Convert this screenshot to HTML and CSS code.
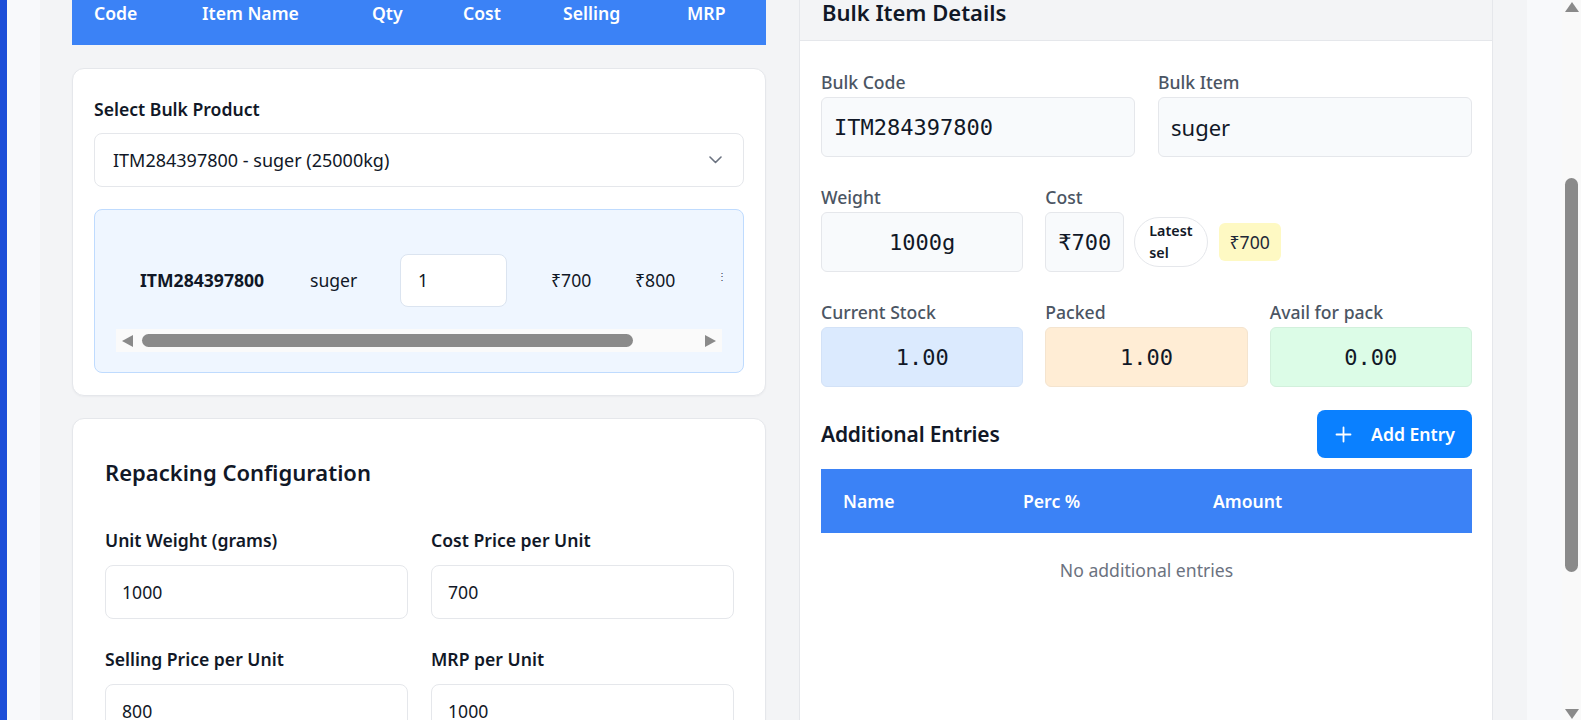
FILE: index.html
```html
<!DOCTYPE html>
<html lang="en">
<head>
<meta charset="utf-8">
<title>Repack Bulk Item</title>
<link rel="stylesheet" href="styles.css">
</head>
<body>
<div class="app">
  <div class="rail"></div>
  <div class="gutter"></div>
  <main class="main">
    <section class="col">
      <div class="list-head">
        <span class="lh-code">Code</span>
        <span class="lh-name">Item Name</span>
        <span class="lh-qty">Qty</span>
        <span class="lh-cost">Cost</span>
        <span class="lh-sell">Selling</span>
        <span class="lh-mrp">MRP</span>
      </div>

      <div class="card card-select">
        <div class="field-label">Select Bulk Product</div>
        <div class="select">
          <span>ITM284397800 - suger (25000kg)</span>
          <svg class="chev" width="13" height="8" viewBox="0 0 13 8"><path d="M1 1l5.5 5.5L12 1" fill="none" stroke="#6b7280" stroke-width="1.6" stroke-linecap="round" stroke-linejoin="round"/></svg>
        </div>
        <div class="picked">
          <div class="picked-row">
            <div class="pc pc-code">ITM284397800</div>
            <div class="pc pc-name">suger</div>
            <div class="pc pc-qty"><div class="qty-input">1</div></div>
            <div class="pc pc-cost">₹700</div>
            <div class="pc pc-sell">₹800</div>
            <div class="pc-more">⋮</div>
          </div>
          <div class="hscroll">
            <span class="arr arr-left"></span>
            <span class="hthumb"></span>
            <span class="arr arr-right"></span>
          </div>
        </div>
      </div>

      <div class="card card-config">
        <h2 class="config-title">Repacking Configuration</h2>
        <div class="form-grid">
          <div class="fg">
            <div class="fg-label">Unit Weight (grams)</div>
            <div class="fg-input">1000</div>
          </div>
          <div class="fg">
            <div class="fg-label">Cost Price per Unit</div>
            <div class="fg-input">700</div>
          </div>
          <div class="fg">
            <div class="fg-label">Selling Price per Unit</div>
            <div class="fg-input">800</div>
          </div>
          <div class="fg">
            <div class="fg-label">MRP per Unit</div>
            <div class="fg-input">1000</div>
          </div>
        </div>
      </div>
    </section>

    <section class="col panel">
      <div class="panel-head">Bulk Item Details</div>
      <div class="panel-body">
        <div class="grid2">
          <div>
            <div class="d-label">Bulk Code</div>
            <div class="d-box mono">ITM284397800</div>
          </div>
          <div>
            <div class="d-label">Bulk Item</div>
            <div class="d-box">suger</div>
          </div>
        </div>

        <div class="grid3 row-gap">
          <div>
            <div class="d-label">Weight</div>
            <div class="d-box mono center">1000g</div>
          </div>
          <div>
            <div class="d-label">Cost</div>
            <div class="cost-line">
              <div class="d-box mono cost-box">₹700</div>
              <span class="latest">Latest sel</span>
              <span class="price-tag">₹700</span>
            </div>
          </div>
          <div></div>
        </div>

        <div class="grid3 row-gap">
          <div>
            <div class="d-label">Current Stock</div>
            <div class="d-box mono center stat-blue">1.00</div>
          </div>
          <div>
            <div class="d-label">Packed</div>
            <div class="d-box mono center stat-orange">1.00</div>
          </div>
          <div>
            <div class="d-label">Avail for pack</div>
            <div class="d-box mono center stat-green">0.00</div>
          </div>
        </div>

        <div class="entries-bar">
          <h3 class="entries-title">Additional Entries</h3>
          <button class="add-btn" type="button">
            <svg width="17" height="17" viewBox="0 0 17 17"><path d="M8.5 1.5v14M1.5 8.5h14" stroke="#fff" stroke-width="1.8" stroke-linecap="round"/></svg>
            <span>Add Entry</span>
          </button>
        </div>
        <div class="entries-head">
          <span>Name</span>
          <span>Perc %</span>
          <span>Amount</span>
        </div>
        <div class="entries-empty">No additional entries</div>
      </div>
    </section>
  </main>
  <div class="gutter-r"></div>
</div>

<div class="vscroll">
  <span class="v-up"></span>
  <span class="v-thumb"></span>
  <span class="v-down"></span>
</div>
</body>
</html>
```

FILE: styles.css
```css
* { box-sizing: border-box; }

html, body {
  margin: 0;
  height: 100%;
  overflow: hidden;
}

body {
  font-family: "Noto Sans", "Open Sans", sans-serif;
  font-size: 17.6px;
  color: #111827;
  background: #f3f4f6;
}

.app {
  display: flex;
  min-height: 720px;
}

.rail {
  flex: none;
  width: 7px;
  background: #1d4ed8;
}

.gutter {
  flex: none;
  width: 33px;
  background: #f8f9fb;
}

.gutter-r {
  flex: 1;
  background: #f8f9fb;
}

.main {
  flex: none;
  width: 1487px;
  display: flex;
  align-items: flex-start;
  gap: 33px;
  padding: 0 34px 0 32px;
  background: #f3f4f6;
}

.col {
  flex: none;
  width: 694px;
}

/* top list header */
.list-head {
  display: flex;
  height: 45px;
  background: #3b82f6;
  color: #fff;
  font-weight: 600;
  line-height: 26px;
  white-space: nowrap;
}
.list-head span { padding-left: 22px; flex: none; }
.lh-code { width: 108px; }
.lh-name { width: 170px; }
.lh-qty { width: 91px; }
.lh-cost { width: 100px; }
.lh-sell { width: 124px; }

/* cards */
.card {
  background: #fff;
  border: 1px solid #e5e7eb;
  border-radius: 12px;
  box-shadow: 0 1px 2px rgba(16, 24, 40, 0.04);
}

.card-select {
  margin-top: 23px;
  padding: 28px 21px 22px;
}

.field-label {
  font-weight: 600;
  line-height: 24px;
  margin-bottom: 12px;
}

.select {
  display: flex;
  align-items: center;
  justify-content: space-between;
  height: 54px;
  padding: 0 21px 0 18px;
  border: 1px solid #e5e7eb;
  border-radius: 8px;
  background: #fff;
  font-size: 18px;
}

.picked {
  margin-top: 22px;
  padding: 21px 21px 20px;
  background: #eff6ff;
  border: 1px solid #bfdbfe;
  border-radius: 8px;
}

.picked-row {
  display: flex;
  align-items: center;
  height: 98px;
  padding-left: 1px;
  white-space: nowrap;
}

.pc {
  flex: none;
  padding-left: 21px;
}
.pc-code { width: 172px; padding-left: 23px; font-weight: 700; }
.pc-name { width: 90px; }
.pc-qty { width: 151px; }
.pc-cost { width: 84px; }
.pc-sell { width: 84px; }
.pc-more {
  flex: none;
  width: 8px;
  margin-left: 19px;
  margin-top: -8px;
  font-size: 10px;
  line-height: 10px;
  text-align: center;
  color: #374151;
}

.qty-input {
  display: flex;
  align-items: center;
  width: 107px;
  height: 53px;
  padding-left: 17px;
  background: #fff;
  border: 1px solid #dbe4f0;
  border-radius: 8px;
}

.hscroll {
  display: flex;
  align-items: center;
  height: 23px;
  background: #fafafa;
}

.arr {
  width: 0;
  height: 0;
  border-top: 6px solid transparent;
  border-bottom: 6px solid transparent;
}
.arr-left {
  margin-left: 6px;
  border-right: 11px solid #8a8a8a;
}
.arr-right {
  margin-left: auto;
  margin-right: 6px;
  border-left: 11px solid #8a8a8a;
}

.hthumb {
  margin-left: 9px;
  width: 491px;
  height: 13px;
  border-radius: 7px;
  background: #8a8a8a;
}

/* repacking config */
.card-config {
  margin-top: 22px;
  padding: 38px 31px 40px 32px;
}

.config-title {
  margin: 0 0 41px;
  font-size: 22px;
  font-weight: 600;
  line-height: 30px;
}

.form-grid {
  display: grid;
  grid-template-columns: 1fr 1fr;
  column-gap: 23px;
  row-gap: 28px;
}

.fg-label {
  font-weight: 600;
  line-height: 24px;
  margin-bottom: 13px;
}

.fg-input {
  display: flex;
  align-items: center;
  height: 54px;
  padding-left: 16px;
  border: 1px solid #e5e7eb;
  border-radius: 8px;
  background: #fff;
}

/* right panel */
.panel {
  min-height: 760px;
  background: #fff;
  border: 1px solid #e5e7eb;
  border-top: none;
}

.panel-head {
  height: 41px;
  padding: 0 22px;
  background: #f3f4f6;
  border-bottom: 1px solid #e5e7eb;
  font-size: 22px;
  font-weight: 600;
  line-height: 24px;
}

.panel-body {
  padding: 29px 20px 0 21px;
}

.grid2 {
  display: grid;
  grid-template-columns: minmax(0, 1fr) minmax(0, 1fr);
  column-gap: 23px;
}

.grid3 {
  display: grid;
  grid-template-columns: minmax(0, 1fr) minmax(0, 1fr) minmax(0, 1fr);
  column-gap: 22px;
}

.row-gap { margin-top: 28px; }

.d-label {
  font-weight: 500;
  color: #4b5563;
  line-height: 24px;
  margin-bottom: 3px;
}

.d-box {
  display: flex;
  align-items: center;
  height: 60px;
  padding: 0 12px;
  font-size: 22px;
  background: #f8fafc;
  border: 1px solid #e5e7eb;
  border-radius: 6px;
  white-space: nowrap;
}

.mono {
  font-family: "DejaVu Sans Mono", "Liberation Mono", monospace;
}

.center { justify-content: center; }

.cost-line {
  display: flex;
  align-items: center;
  white-space: nowrap;
}

.cost-box { flex: none; }

.latest {
  flex: none;
  width: min-content;
  margin-left: 10px;
  padding: 2px 14px;
  font-size: 14.3px;
  font-weight: 600;
  line-height: 22px;
  white-space: normal;
  background: #fff;
  border: 1px solid #e5e7eb;
  border-radius: 9999px;
}

.price-tag {
  flex: none;
  margin-left: 11px;
  padding: 6px 11px;
  line-height: 26px;
  color: #1f2937;
  background: #fef9c3;
  border-radius: 6px;
}

.stat-blue { background: #dbeafe; border-color: #d3e2f7; }
.stat-orange { background: #ffedd5; border-color: #f4e4cf; }
.stat-green { background: #dcfce7; border-color: #d2f0dc; }

.entries-bar {
  display: flex;
  align-items: center;
  justify-content: space-between;
  margin-top: 23px;
}

.entries-title {
  margin: 0;
  font-size: 21px;
  font-weight: 600;
  letter-spacing: -0.2px;
  line-height: 30px;
}

.add-btn {
  display: flex;
  align-items: center;
  gap: 19px;
  height: 48px;
  padding: 0 17px 0 18px;
  font-family: inherit;
  font-size: 17.6px;
  font-weight: 600;
  color: #fff;
  background: #0a80ff;
  border: none;
  border-radius: 8px;
}

.entries-head {
  display: grid;
  grid-template-columns: 180px 190px 1fr;
  align-items: center;
  height: 64px;
  margin-top: 11px;
  background: #3b82f6;
  color: #fff;
  font-weight: 600;
}
.entries-head span { padding-left: 22px; }

.entries-empty {
  padding: 25px 0;
  text-align: center;
  line-height: 24px;
  color: #6b7280;
}

/* page scrollbar overlay */
.vscroll {
  position: fixed;
  top: 0;
  right: 0;
  width: 19px;
  height: 720px;
  background: #f9f9f9;
}

.v-up, .v-down {
  position: absolute;
  left: 3px;
  width: 0;
  height: 0;
  border-left: 7px solid transparent;
  border-right: 7px solid transparent;
}
.v-up { top: 2px; border-bottom: 10px solid #8a8a8a; }
.v-down { bottom: 1px; border-top: 10px solid #8a8a8a; }

.v-thumb {
  position: absolute;
  top: 178px;
  left: 3px;
  width: 13px;
  height: 394px;
  border-radius: 7px;
  background: #8a8a8a;
}
```
